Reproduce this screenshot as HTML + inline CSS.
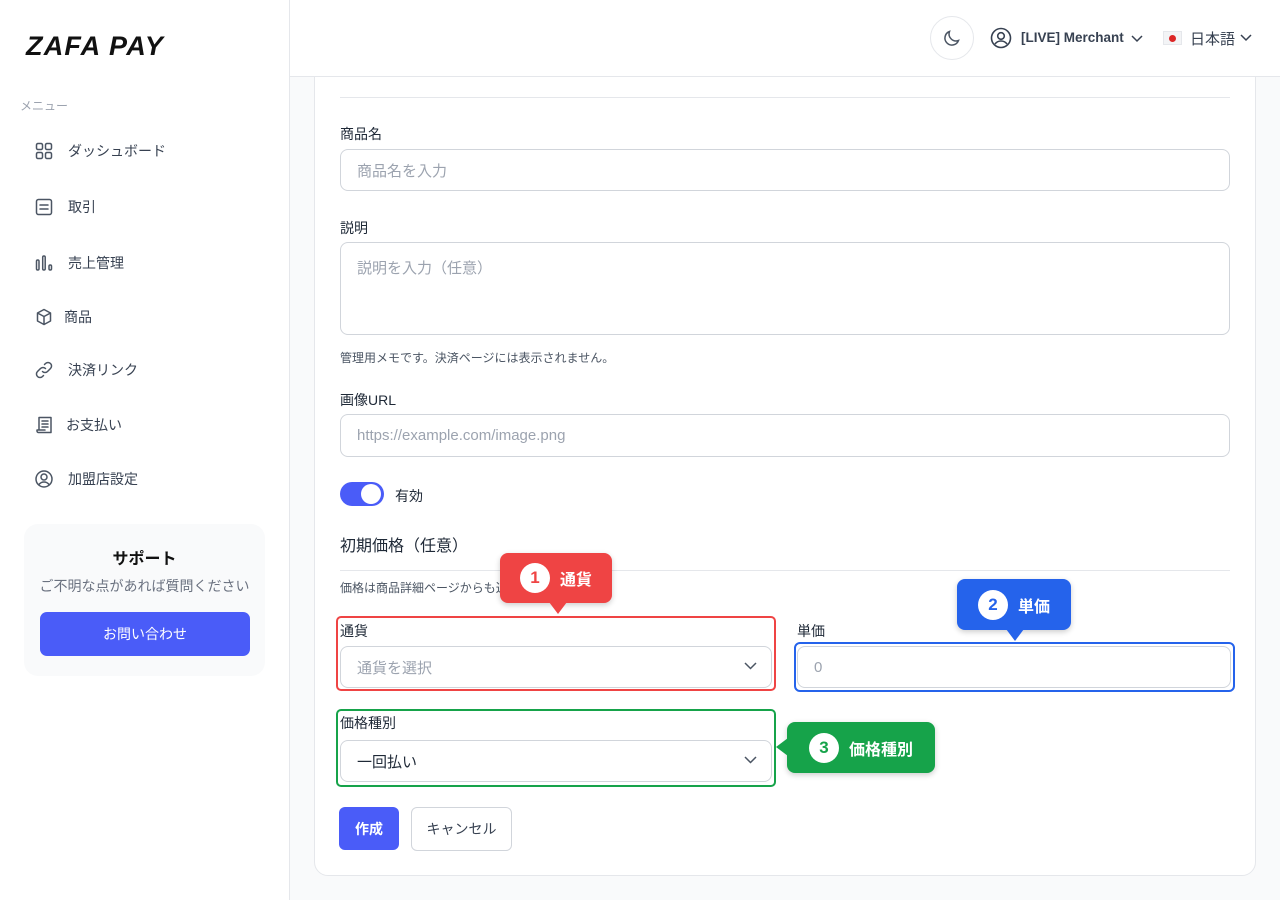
<!DOCTYPE html>
<html><head><meta charset="utf-8"><style>
*{box-sizing:border-box;margin:0;padding:0}
body{width:1280px;height:900px;position:relative;overflow:hidden;background:#f9fafb;font-family:"Liberation Sans","Noto Sans CJK JP",sans-serif;color:#1f2937}
.a{position:absolute}
.side{left:0;top:0;width:290px;height:900px;background:#fff;border-right:1px solid #e5e7eb}
.logo{left:26px;top:31px;font-size:27px;font-weight:bold;font-style:italic;color:#111;letter-spacing:1.2px}
.nav{left:34px;font-size:14px;color:#374151;display:flex;align-items:center;gap:14px;height:24px}
.nav svg{width:20px;height:20px;stroke:#4b5563;fill:none;stroke-width:1.5;stroke-linecap:round;stroke-linejoin:round}
.hdr{left:290px;top:0;width:990px;height:77px;background:#fff;border-bottom:1px solid #e5e7eb}
.card{left:314px;top:40px;width:942px;height:836px;background:#fff;border:1px solid #e5e7eb;border-radius:14px}
.lbl{font-size:14px;color:#1f2937}
.inp{border:1px solid #d1d5db;border-radius:8px;background:#fff;font-size:15px;color:#9ca3af;padding-left:16px;display:flex;align-items:center}
.chev{position:absolute;right:14px;top:50%;margin-top:-5px}
.call{color:#fff;font-weight:bold;font-size:16px;border-radius:8px;display:flex;align-items:center;justify-content:center;gap:10px;box-shadow:0 2px 6px rgba(0,0,0,.2)}
.num{width:30px;height:30px;border-radius:50%;background:#fff;font-size:17px;display:flex;align-items:center;justify-content:center}
</style></head><body>
<div class="a side"></div>
<div class="a logo">ZAFA PAY</div>
<div class="a" style="left:20px;top:97px;font-size:12px;color:#9ca3af">メニュー</div>
<div class="a nav" style="top:139px"><svg viewBox="0 0 20 20"><rect x="2.5" y="2.5" width="6" height="6" rx="1.5"/><rect x="11.5" y="2.5" width="6" height="6" rx="1.5"/><rect x="2.5" y="11.5" width="6" height="6" rx="1.5"/><rect x="11.5" y="11.5" width="6" height="6" rx="1.5"/></svg>ダッシュボード</div>
<div class="a nav" style="top:195px"><svg viewBox="0 0 20 20"><rect x="2.5" y="2.5" width="15" height="15" rx="2"/><path d="M6 8h8M6 12h8"/></svg>取引</div>
<div class="a nav" style="top:251px"><svg viewBox="0 0 20 20"><rect x="2.5" y="7" width="2.5" height="10" rx="1.2"/><rect x="8.7" y="3" width="2.5" height="14" rx="1.2"/><rect x="15" y="12" width="2.5" height="5" rx="1.2"/></svg>売上管理</div>
<div class="a nav" style="top:305px;gap:10px"><svg viewBox="0 0 20 20"><path d="M10 2.5l6.5 3.5v8L10 17.5 3.5 14V6z M3.5 6L10 9.5 16.5 6 M10 9.5v8"/></svg>商品</div>
<div class="a nav" style="top:358px"><svg viewBox="0 0 20 20"><path d="M8.5 11.5a3.5 3.5 0 005 0l3-3a3.5 3.5 0 00-5-5l-1 1M11.5 8.5a3.5 3.5 0 00-5 0l-3 3a3.5 3.5 0 005 5l1-1"/></svg>決済リンク</div>
<div class="a nav" style="top:413px;gap:12px"><svg viewBox="0 0 20 20"><path d="M5 15V2.5h12v15H4.5a1.5 1.5 0 01-1.5-1.5v-1h8M8 6h6M8 9h6M8 12h6"/></svg>お支払い</div>
<div class="a nav" style="top:467px"><svg viewBox="0 0 20 20"><circle cx="10" cy="10" r="8"/><circle cx="10" cy="8" r="3"/><path d="M5 15.5c1.5-2 3-2.5 5-2.5s3.5.5 5 2.5"/></svg>加盟店設定</div>
<div class="a" style="left:24px;top:524px;width:241px;height:152px;background:#f9fafb;border-radius:14px"></div>
<div class="a" style="left:24px;top:545px;width:241px;text-align:center;font-size:16px;font-weight:bold;color:#111">サポート</div>
<div class="a" style="left:24px;top:576px;width:241px;text-align:center;font-size:14px;color:#6b7280">ご不明な点があれば質問ください</div>
<div class="a" style="left:40px;top:612px;width:210px;height:44px;background:#4a5cf8;border-radius:7px;color:#fff;font-size:14px;display:flex;align-items:center;justify-content:center">お問い合わせ</div>

<div class="a card"></div>
<div class="a hdr"></div>
<div class="a" style="left:930px;top:16px;width:44px;height:44px;border:1px solid #e5e7eb;border-radius:50%;display:flex;align-items:center;justify-content:center"><svg width="20" height="20" viewBox="0 0 20 20" fill="none" stroke="#4b5563" stroke-width="1.5"><path d="M16.5 12.5A7 7 0 017.5 3.5a7 7 0 109 9z"/></svg></div>
<svg class="a" style="left:990px;top:27px" width="22" height="22" viewBox="0 0 22 22" fill="none" stroke="#374151" stroke-width="1.6"><circle cx="11" cy="11" r="9.5"/><circle cx="11" cy="9" r="3.3"/><path d="M5 17c1.6-2.2 3.5-3 6-3s4.4.8 6 3"/></svg>
<div class="a" style="left:1021px;top:30px;font-size:13.5px;font-weight:bold;color:#374151">[LIVE] Merchant</div>
<svg class="a" style="left:1131px;top:35px" width="12" height="8" viewBox="0 0 12 8" fill="none" stroke="#374151" stroke-width="1.5"><path d="M1 1l5 5 5-5"/></svg>
<div class="a" style="left:1163px;top:31px;width:19px;height:14px;background:#f3f4f6;border:1px solid #e5e7eb"><div style="width:7px;height:7px;border-radius:50%;background:#dc2626;margin:3px 0 0 5px"></div></div>
<div class="a" style="left:1190px;top:28px;font-size:15px;color:#374151">日本語</div>
<svg class="a" style="left:1240px;top:34px" width="12" height="8" viewBox="0 0 12 8" fill="none" stroke="#374151" stroke-width="1.5"><path d="M1 1l5 5 5-5"/></svg>

<div class="a" style="left:340px;top:97px;width:890px;height:1px;background:#e5e7eb"></div>
<div class="a lbl" style="left:340px;top:124px">商品名</div>
<div class="a inp" style="left:340px;top:149px;width:890px;height:42px">商品名を入力</div>
<div class="a lbl" style="left:340px;top:218px">説明</div>
<div class="a inp" style="left:340px;top:242px;width:890px;height:93px;align-items:flex-start;padding-top:14px">説明を入力（任意）</div>
<div class="a" style="left:340px;top:349px;font-size:12px;color:#4b5563">管理用メモです。決済ページには表示されません。</div>
<div class="a lbl" style="left:340px;top:390px">画像URL</div>
<div class="a inp" style="left:340px;top:414px;width:890px;height:43px">https://example.com/image.png</div>
<div class="a" style="left:340px;top:482px;width:44px;height:24px;border-radius:12px;background:#4a5cf8"><div style="position:absolute;left:21px;top:2px;width:20px;height:20px;border-radius:50%;background:#fff"></div></div>
<div class="a lbl" style="left:395px;top:486px">有効</div>
<div class="a" style="left:340px;top:532px;font-size:16px;color:#1f2937">初期価格（任意）</div>
<div class="a" style="left:340px;top:570px;width:890px;height:1px;background:#e5e7eb"></div>
<div class="a" style="left:340px;top:579px;font-size:12px;color:#4b5563">価格は商品詳細ページからも追加できます。</div>

<div class="a" style="left:336px;top:616px;width:440px;height:75px;border:2px solid #ef4444;border-radius:5px"></div>
<div class="a lbl" style="left:340px;top:621px">通貨</div>
<div class="a inp" style="left:340px;top:646px;width:432px;height:42px">通貨を選択<svg class="chev" width="13" height="8" viewBox="0 0 13 8" fill="none" stroke="#4b5563" stroke-width="1.5"><path d="M1 1l5.5 5.5L12 1"/></svg></div>
<div class="a lbl" style="left:797px;top:621px">単価</div>
<div class="a" style="left:794px;top:642px;width:441px;height:50px;border:2.5px solid #2563eb;border-radius:6px"></div>
<div class="a inp" style="left:797px;top:646px;width:434px;height:42px">0</div>

<div class="a" style="left:336px;top:709px;width:440px;height:78px;border:2px solid #16a34a;border-radius:5px"></div>
<div class="a lbl" style="left:340px;top:713px">価格種別</div>
<div class="a inp" style="left:340px;top:740px;width:432px;height:42px;color:#1f2937">一回払い<svg class="chev" width="13" height="8" viewBox="0 0 13 8" fill="none" stroke="#4b5563" stroke-width="1.5"><path d="M1 1l5.5 5.5L12 1"/></svg></div>

<div class="a call" style="left:500px;top:553px;width:112px;height:50px;background:#ef4444"><span class="num" style="color:#ef4444">1</span>通貨</div>
<div class="a" style="left:549px;top:602px;border-left:9px solid transparent;border-right:9px solid transparent;border-top:12px solid #ef4444"></div>
<div class="a call" style="left:957px;top:579px;width:114px;height:51px;background:#2563eb"><span class="num" style="color:#2563eb">2</span>単価</div>
<div class="a" style="left:1006px;top:629px;border-left:9px solid transparent;border-right:9px solid transparent;border-top:12px solid #2563eb"></div>
<div class="a call" style="left:787px;top:722px;width:148px;height:51px;background:#16a34a"><span class="num" style="color:#16a34a">3</span>価格種別</div>
<div class="a" style="left:776px;top:738px;border-top:9px solid transparent;border-bottom:9px solid transparent;border-right:12px solid #16a34a"></div>

<div class="a" style="left:339px;top:807px;width:60px;height:43px;background:#4a5cf8;border-radius:6px;color:#fff;font-size:14px;font-weight:bold;display:flex;align-items:center;justify-content:center">作成</div>
<div class="a" style="left:411px;top:807px;width:101px;height:44px;border:1px solid #d1d5db;border-radius:6px;color:#374151;font-size:14px;display:flex;align-items:center;justify-content:center">キャンセル</div>
</body></html>
